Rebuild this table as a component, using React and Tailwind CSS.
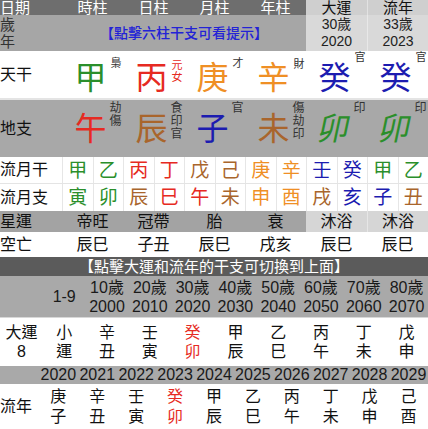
import React from 'react';

const COLOR = {
  g: 'text-[#2b8f2b]',
  r: 'text-[#e62a22]',
  b: 'text-[#a9652c]',
  o: 'text-[#ef8f25]',
  u: 'text-[#1c1cb0]',
};

const stems = [
  { ch: '甲', c: 'g', sup: ['梟'], top: 'top-[6px]' },
  { ch: '丙', c: 'r', sup: ['元', '女'], red: true, top: 'top-[8px]' },
  { ch: '庚', c: 'o', sup: ['才'], top: 'top-[6px]' },
  { ch: '辛', c: 'o', sup: ['財'], top: 'top-[7px]' },
  { ch: '癸', c: 'u', sup: ['官'], top: 'top-[0px]' },
  { ch: '癸', c: 'u', sup: ['官'], top: 'top-[0px]' },
];

const branches = [
  { ch: '午', c: 'r', sup: ['劫', '傷'] },
  { ch: '辰', c: 'b', sup: ['食', '印', '官'] },
  { ch: '子', c: 'u', sup: ['官'] },
  { ch: '未', c: 'b', sup: ['傷', '劫', '印'] },
  { ch: '卯', c: 'g', sup: ['印'], slant: true },
  { ch: '卯', c: 'g', sup: ['印'], slant: true },
];

const monthStems = [['甲', 'g'], ['乙', 'g'], ['丙', 'r'], ['丁', 'r'], ['戊', 'b'], ['己', 'b'], ['庚', 'o'], ['辛', 'o'], ['壬', 'u'], ['癸', 'u'], ['甲', 'g'], ['乙', 'g']];
const monthBranches = [['寅', 'g'], ['卯', 'g'], ['辰', 'b'], ['巳', 'r'], ['午', 'r'], ['未', 'b'], ['申', 'o'], ['酉', 'o'], ['戌', 'b'], ['亥', 'u'], ['子', 'u'], ['丑', 'b']];

const luck = [['小', '運'], ['辛', '丑'], ['壬', '寅'], ['癸', '卯'], ['甲', '辰'], ['乙', '巳'], ['丙', '午'], ['丁', '未'], ['戊', '申']];
const years = [['庚', '子'], ['辛', '丑'], ['壬', '寅'], ['癸', '卯'], ['甲', '辰'], ['乙', '巳'], ['丙', '午'], ['丁', '未'], ['戊', '申'], ['己', '酉']];

const MonthRow = ({ label, items, border }) => (
  <div className={`flex h-[27px] bg-white ${border ? 'border-b border-[#e4e4e4]' : ''}`}>
    <div className="w-[62px] flex items-center text-[16px] text-[#111]">{label}</div>
    {items.map(([ch, c], i) => (
      <div key={i} className={`w-[30.5px] flex items-center justify-center border-l border-[#e6e6e6] text-[19px] leading-none ${COLOR[c]}`}>
        {ch}
      </div>
    ))}
  </div>
);

export default function App() {
  return (
    <div className="w-[428px] h-[429px] overflow-hidden bg-white font-['Liberation_Sans','Noto_Sans_CJK_TC',sans-serif] text-[#111]">
      {/* header */}
      <div className="flex h-[15px]">
        <div className="flex h-full w-[306px] items-center bg-[#6e6e6e] text-[15px] leading-[15px] text-white">
          <div className="w-[62px]">日期</div>
          {['時柱', '日柱', '月柱', '年柱'].map((t) => (
            <div key={t} className="w-[61px] text-center">{t}</div>
          ))}
        </div>
        <div className="flex h-full w-[61px] items-center justify-center bg-[#cfcfcf] text-[15px] leading-[15px]">大運</div>
        <div className="flex h-full w-[61px] items-center justify-center border-l border-[#e2e2e2] bg-[#cfcfcf] text-[15px] leading-[15px]">流年</div>
      </div>

      {/* 歲年 */}
      <div className="flex h-[36px]">
        <div className="flex w-[306px] bg-[#a6a6a6]">
          <div className="flex w-[62px] flex-col justify-center text-[15px] leading-[17px] text-[#333]">
            <span>歲</span>
            <span>年</span>
          </div>
          <div className="flex w-[244px] items-center justify-center text-[14px] font-medium text-[#2323d6]">【點擊六柱干支可看提示】</div>
        </div>
        {[['30歲', '2020'], ['33歲', '2023']].map(([a, y], i) => (
          <div key={y} className={`flex w-[61px] flex-col items-center justify-center bg-[#d9d9d9] text-[14px] leading-[17px] text-[#222] ${i ? 'border-l border-[#e8e8e8]' : ''}`}>
            <span>{a}</span>
            <span>{y}</span>
          </div>
        ))}
      </div>

      {/* 天干 */}
      <div className="flex h-[47px] bg-white">
        <div className="flex w-[62px] items-center text-[16px]">天干</div>
        {stems.map((s, i) => (
          <div key={i} className="relative flex w-[61px] items-center justify-center">
            <span className={`mr-[4px] mt-[6px] text-[32px] leading-none ${COLOR[s.c]}`}>{s.ch}</span>
            <span className={`absolute left-[calc(50%+18px)] ${s.top} flex flex-col text-[11px] leading-[12px] ${s.red ? 'text-[#e62a22]' : 'text-[#333]'}`}>
              {s.sup.map((x, j) => <span key={j}>{x}</span>)}
            </span>
          </div>
        ))}
      </div>
      <div className="h-[2px] bg-[#e4e4e4]" />

      {/* 地支 */}
      <div className="flex h-[57px] bg-[#a8a8a8]">
        <div className="flex w-[62px] items-center text-[16px]">地支</div>
        {branches.map((s, i) => (
          <div key={i} className="relative flex w-[61px] items-center justify-center">
            <span className={`mr-[4px] inline-block text-[32px] leading-none ${s.slant ? '-skew-x-12' : ''} ${COLOR[s.c]} ${s.ch === '子' ? 'text-[#0b0bb8]' : ''}`}>{s.ch}</span>
            <span className="absolute left-[calc(50%+17px)] top-[2px] flex flex-col text-[12px] leading-[13px] text-[#333]">
              {s.sup.map((x, j) => <span key={j}>{x}</span>)}
            </span>
          </div>
        ))}
      </div>

      <MonthRow label="流月干" items={monthStems} border />
      <MonthRow label="流月支" items={monthBranches} />

      {/* 星運 */}
      <div className="flex h-[21px] text-[16px] leading-none">
        <div className="flex w-[306px] items-center bg-[#a3a3a3]">
          <div className="w-[62px]">星運</div>
          {['帝旺', '冠帶', '胎', '衰'].map((t) => (
            <div key={t} className="w-[61px] text-center">{t}</div>
          ))}
        </div>
        <div className="flex w-[61px] items-center justify-center bg-[#d6d6d6]">沐浴</div>
        <div className="flex w-[61px] items-center justify-center border-l border-[#e6e6e6] bg-[#d6d6d6]">沐浴</div>
      </div>

      {/* 空亡 */}
      <div className="flex h-[25px] items-center bg-white text-[16px] leading-none">
        <div className="w-[62px]">空亡</div>
        {['辰巳', '子丑', '辰巳', '戌亥', '辰巳', '辰巳'].map((t, i) => (
          <div key={i} className="w-[61px] text-center">{t}</div>
        ))}
      </div>

      <div className="flex h-[19px] items-center justify-center bg-[#5b5b5b] text-[15px] leading-none text-white">
        【點擊大運和流年的干支可切換到上面】
      </div>

      {/* ages */}
      <div className="flex h-[41px] bg-[#a9a9a9] text-[16px] leading-[19px] text-[#1a1a1a]">
        <div className="flex-1" />
        <div className="flex flex-1 items-center justify-center">1-9</div>
        {[1, 2, 3, 4, 5, 6, 7, 8].map((n) => (
          <div key={n} className="flex flex-1 flex-col items-center justify-center">
            <span>{n * 10}歲</span>
            <span>{1990 + n * 10}</span>
          </div>
        ))}
      </div>

      {/* 大運 */}
      <div className="flex h-[49px] border-t border-[#d8d8d8] bg-white text-[16px] leading-[19px]">
        <div className="flex flex-1 flex-col items-center justify-center">
          <span>大運</span>
          <span>8</span>
        </div>
        {luck.map(([a, b], i) => (
          <div key={i} className={`flex flex-1 flex-col items-center justify-center ${a === '癸' ? 'text-[#e62a22]' : ''}`}>
            <span>{a}</span>
            <span>{b}</span>
          </div>
        ))}
      </div>

      {/* years */}
      <div className="flex h-[18px] items-center bg-[#a9a9a9] text-[16px] leading-none text-[#1a1a1a]">
        <div className="flex-1" />
        {years.map((_, i) => (
          <div key={i} className="flex-1 text-center">{2020 + i}</div>
        ))}
      </div>

      {/* 流年 */}
      <div className="flex h-[45px] bg-white text-[16px] leading-[20px]">
        <div className="flex flex-1 items-center">流年</div>
        {years.map(([a, b], i) => (
          <div key={i} className={`flex flex-1 flex-col items-center justify-center ${a === '癸' ? 'text-[#e62a22]' : ''}`}>
            <span>{a}</span>
            <span>{b}</span>
          </div>
        ))}
      </div>
    </div>
  );
}
